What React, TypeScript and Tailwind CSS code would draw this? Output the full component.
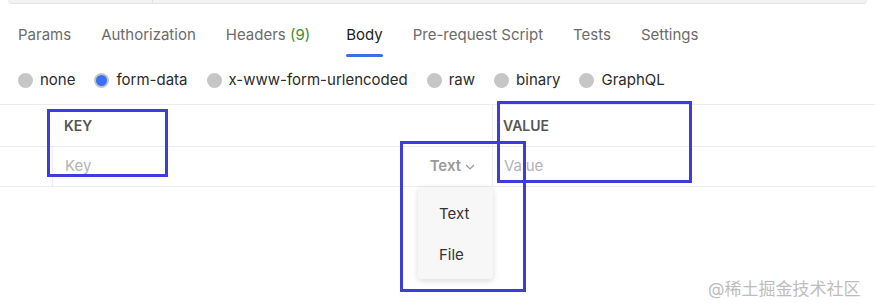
import React from "react";

const tabs = [
  { label: "Params" },
  { label: "Authorization" },
  { label: "Headers", count: "(9)" },
  { label: "Body", active: true },
  { label: "Pre-request Script" },
  { label: "Tests" },
  { label: "Settings" },
];

const bodyTypes = ["none", "form-data", "x-www-form-urlencoded", "raw", "binary", "GraphQL"];

const Radio: React.FC<{ checked?: boolean }> = ({ checked }) =>
  checked ? (
    <span className="w-[15px] h-[15px] rounded-full bg-[#c4c4c4] flex items-center justify-center">
      <span className="w-[11px] h-[11px] rounded-full bg-[#3b6ff5]" />
    </span>
  ) : (
    <span className="w-[15px] h-[15px] rounded-full bg-[#c6c6c6]" />
  );

const App: React.FC = () => {
  return (
    <div
      className="relative w-[875px] h-[303px] bg-white overflow-hidden text-[15px]"
      style={{ fontFamily: "Inter, 'Noto Sans', 'Noto Sans CJK SC', sans-serif" }}
    >
      {/* tail of the url bar above */}
      <div className="mx-[8px] h-[4px] flex bg-[#f3f3f3] border-b border-[#e3e3e3] rounded-b-[4px]">
        <div className="w-[145px] border-r border-[#e3e3e3]" />
      </div>

      {/* Tabs */}
      <div className="flex items-start h-[50px] pl-[18px] pt-[20px] gap-[30px]">
        {tabs.map((t) => (
          <div key={t.label} className={`flex flex-col ${t.active ? "ml-[6px]" : ""}`}>
            <span className={t.active ? "text-[#212121]" : "text-[#6b6b6b]"}>
              {t.label}
              {t.count && <span className="text-[#3d8b2c]"> {t.count}</span>}
            </span>
            {t.active && <span className="mt-[7px] h-[3px] bg-[#3b6ee8] rounded-sm" />}
          </div>
        ))}
      </div>

      {/* Body type radios */}
      <div className="flex items-center h-[50px] pt-[2px] pl-[18px] gap-[19px]">
        {bodyTypes.map((b, i) => (
          <label key={b} className="flex items-center gap-[7px] text-[#2b2b2b]">
            <Radio checked={i === 1} />
            {b}
          </label>
        ))}
      </div>

      {/* Table */}
      <div className="border-t border-[#ececec]">
        <div className="flex h-[42px] border-b border-[#ececec]">
          <div className="w-[53px]" />
          <div className="w-[439px] flex items-center pl-[11px] text-[14px] font-semibold text-[#555]">KEY</div>
          <div className="flex-1 border-l border-[#ececec] flex items-center pl-[10px] text-[14px] font-semibold text-[#555]">
            VALUE
          </div>
        </div>
        <div className="flex h-[40px] border-b border-[#ececec]">
          <div className="w-[53px] border-r border-[#ececec]" />
          <div className="w-[439px] flex items-center pl-[12px] pr-[17px]">
            <span className="text-[#b3b3b3]">Key</span>
            <span className="ml-auto flex items-center gap-[4px] text-[#9a9a9a] font-semibold">
              Text
              <svg width="10" height="6" viewBox="0 0 10 6" fill="none" stroke="#9a9a9a" strokeWidth="1.2">
                <path d="M1 1l4 4 4-4" />
              </svg>
            </span>
          </div>
          <div className="flex-1 border-l border-[#ececec] flex items-center pl-[11px] text-[#b3b3b3]">Value</div>
        </div>
      </div>

      {/* Type dropdown */}
      <div className="absolute left-[418px] top-[187px] w-[75px] h-[92px] bg-[#f7f7f7] rounded-[4px] shadow-[0_2px_6px_rgba(0,0,0,0.15)] flex flex-col pl-[21px] pt-[16px] gap-[18px] text-[#333]">
        <span>Text</span>
        <span>File</span>
      </div>

      {/* annotation boxes */}
      <div className="absolute left-[47px] top-[109px] w-[121px] h-[68px] border-[3px] border-[#3d3ddc]" />
      <div className="absolute left-[497px] top-[101px] w-[195px] h-[82px] border-[3px] border-[#3d3ddc]" />
      <div className="absolute left-[400px] top-[141px] w-[126px] h-[151px] border-[3px] border-[#3d3ddc]" />

      {/* watermark */}
      <div className="absolute left-[708px] top-[277px] text-[17px] text-[#bdbdbd]">@稀土掘金技术社区</div>
    </div>
  );
};

export default App;
